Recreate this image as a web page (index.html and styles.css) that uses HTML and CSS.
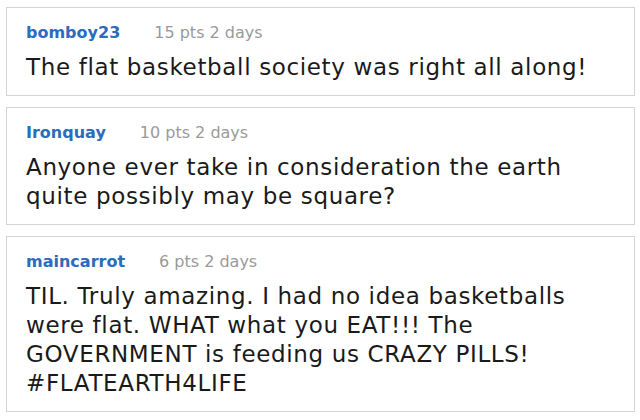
FILE: index.html
```html
<!DOCTYPE html>
<html>
<head>
<meta charset="utf-8">
<link rel="stylesheet" href="styles.css">
</head>
<body>
<div class="comments">
  <div class="comment">
    <div class="meta"><span class="user">bomboy23</span><span class="info">15 pts 2 days</span></div>
    <p class="text">The flat basketball society was right all along!</p>
  </div>
  <div class="comment">
    <div class="meta"><span class="user">Ironquay</span><span class="info">10 pts 2 days</span></div>
    <p class="text">Anyone ever take in consideration the earth quite possibly may be square?</p>
  </div>
  <div class="comment">
    <div class="meta"><span class="user">maincarrot</span><span class="info">6 pts 2 days</span></div>
    <p class="text">TIL. Truly amazing. I had no idea basketballs were flat. WHAT what you EAT!!! The GOVERNMENT is feeding us CRAZY PILLS! #FLATEARTH4LIFE</p>
  </div>
</div>
</body>
</html>
```
FILE: styles.css
```css
html, body {
  margin: 0;
  background: #ffffff;
}
body {
  padding: 7px 5px 0 6px;
  font-family: "DejaVu Sans", Verdana, sans-serif;
}
.comments {
  display: flex;
  flex-direction: column;
  gap: 11px;
}
.comment {
  border: 1px solid #d4d4d4;
  padding: 15px 19px 13px;
  background: #fff;
}
.meta {
  display: flex;
  align-items: baseline;
  font-size: 16px;
  line-height: 20px;
  margin-bottom: 10px;
}
.user {
  font-weight: bold;
  color: #2c6bbd;
}
.info {
  color: #9a9a9a;
  margin-left: 34px;
}
.text {
  margin: 0;
  font-size: 23px;
  letter-spacing: 0.65px;
  line-height: 29px;
  color: #1a1a1a;
}
```
